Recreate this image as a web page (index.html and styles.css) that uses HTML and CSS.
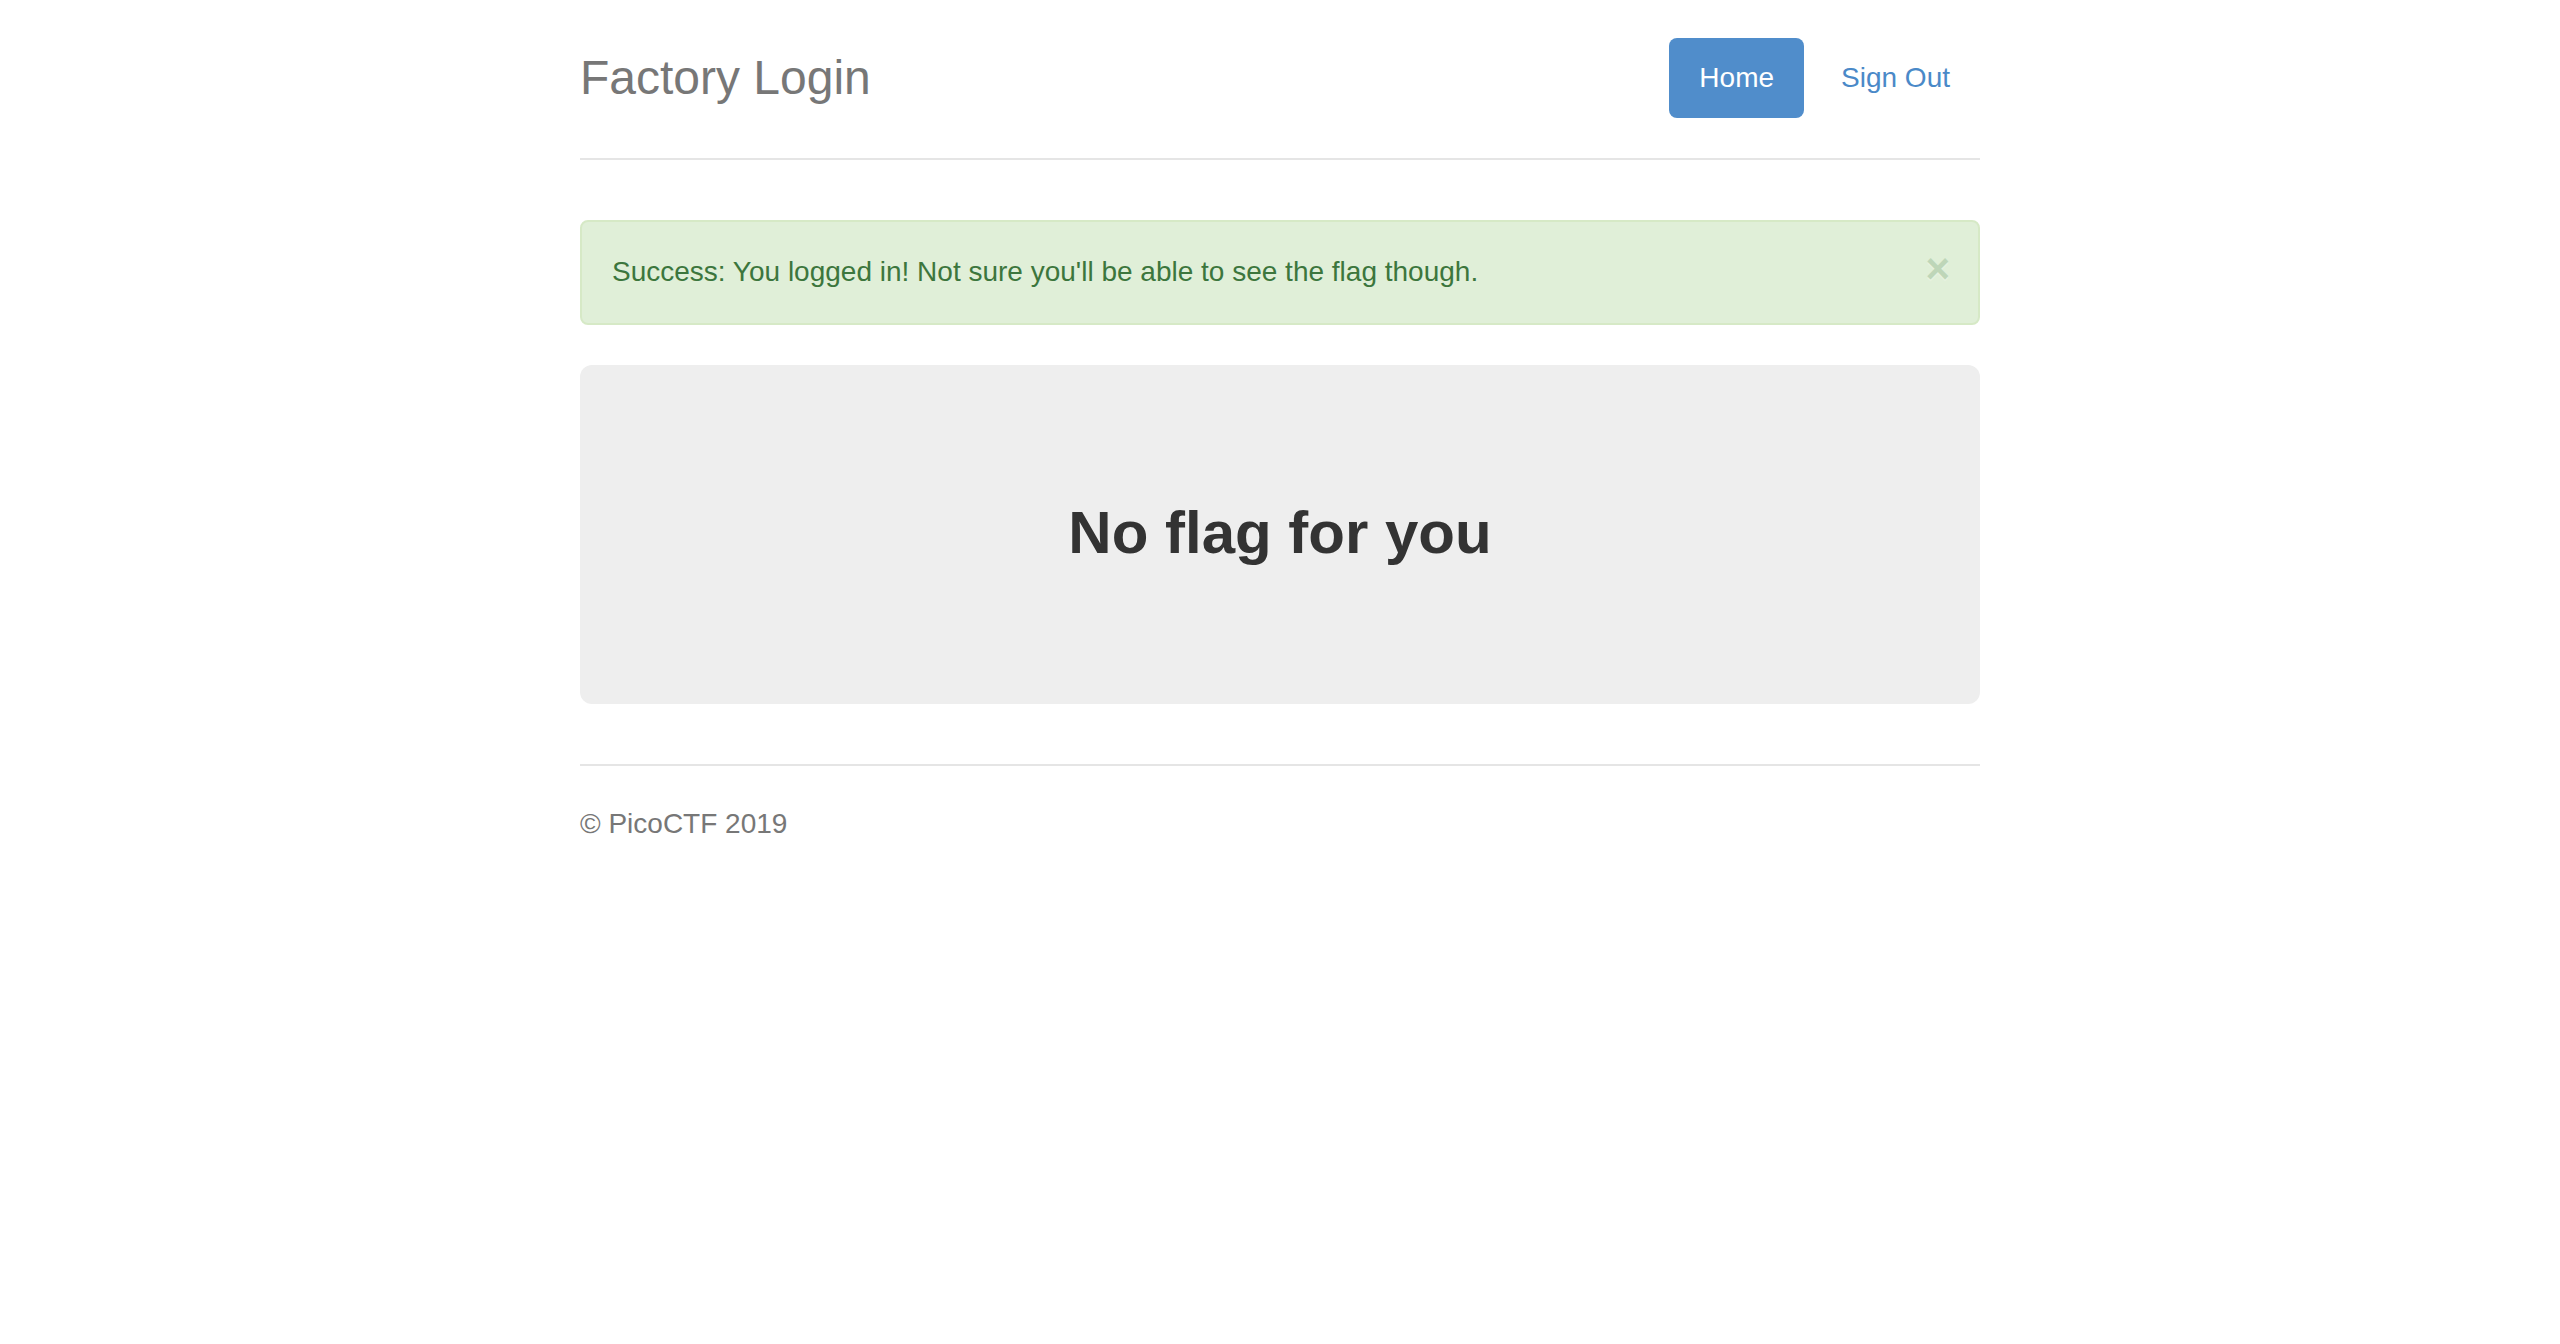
FILE: index.html
```html
<!DOCTYPE html>
<html lang="en">
<head>
<meta charset="utf-8">
<title>Factory Login</title>
<link rel="stylesheet" href="styles.css">
</head>
<body>
<div class="container">
  <div class="header">
    <h3 class="brand">Factory Login</h3>
    <ul class="nav-pills">
      <li class="active"><a href="#">Home</a></li>
      <li><a href="#">Sign Out</a></li>
    </ul>
  </div>
  <div class="alert">
    <span class="alert-text">Success: You logged in! Not sure you'll be able to see the flag though.</span>
    <button class="close" type="button">&times;</button>
  </div>
  <div class="jumbotron">
    <h2 class="jumbo-title">No flag for you</h2>
  </div>
  <footer class="footer">
    <p class="footer-text">&copy; PicoCTF 2019</p>
  </footer>
</div>
</body>
</html>
```

FILE: styles.css
```css
* { box-sizing: border-box; }
html, body { margin: 0; }
body {
  padding-top: 38px;
  padding-bottom: 40px;
  font-family: "Liberation Sans", Arial, Helvetica, sans-serif;
  font-size: 28px;
  line-height: 40px;
  color: #333;
  background: #fff;
}
.container {
  width: 1460px;
  margin: 0 auto;
  padding: 0 30px;
}
.header {
  display: flex;
  justify-content: space-between;
  align-items: flex-start;
  padding-bottom: 40px;
  border-bottom: 2px solid #e5e5e5;
  margin-bottom: 60px;
}
.brand {
  margin: 0;
  font-size: 48px;
  font-weight: 500;
  line-height: 80px;
  color: #777;
}
.nav-pills {
  display: flex;
  gap: 7px;
  list-style: none;
  margin: 0;
  padding: 0;
}
.nav-pills a {
  display: block;
  padding: 20px 30px;
  line-height: 40px;
  border-radius: 8px;
  color: #4a89c8;
  text-decoration: none;
}
.nav-pills .active a {
  background: #508dcb;
  color: #fff;
}
.alert {
  display: flex;
  justify-content: space-between;
  align-items: flex-start;
  padding: 30px 70px 29px 30px;
  margin-bottom: 40px;
  border: 2px solid #d6e9c6;
  border-radius: 8px;
  background: #e0efd8;
  color: #3c763d;
}
.close {
  position: relative;
  top: -4px;
  right: -42px;
  padding: 0;
  border: 0;
  background: transparent;
  font-family: "Liberation Sans", Arial, sans-serif;
  font-size: 42px;
  font-weight: bold;
  line-height: 1;
  color: #3c763d;
  opacity: 0.2;
  text-shadow: 0 2px 0 #fff;
  cursor: pointer;
}
.jumbotron {
  background: #eee;
  border-radius: 12px;
  padding: 96px 120px;
  margin-bottom: 60px;
  text-align: center;
}
.jumbo-title {
  margin: 39px 0 42px;
  font-size: 60px;
  font-weight: bold;
  line-height: 66px;
  color: #333;
}
.footer {
  border-top: 2px solid #e5e5e5;
  padding-top: 38px;
  color: #777;
}
.footer-text {
  margin: 0 0 20px;
}
```
